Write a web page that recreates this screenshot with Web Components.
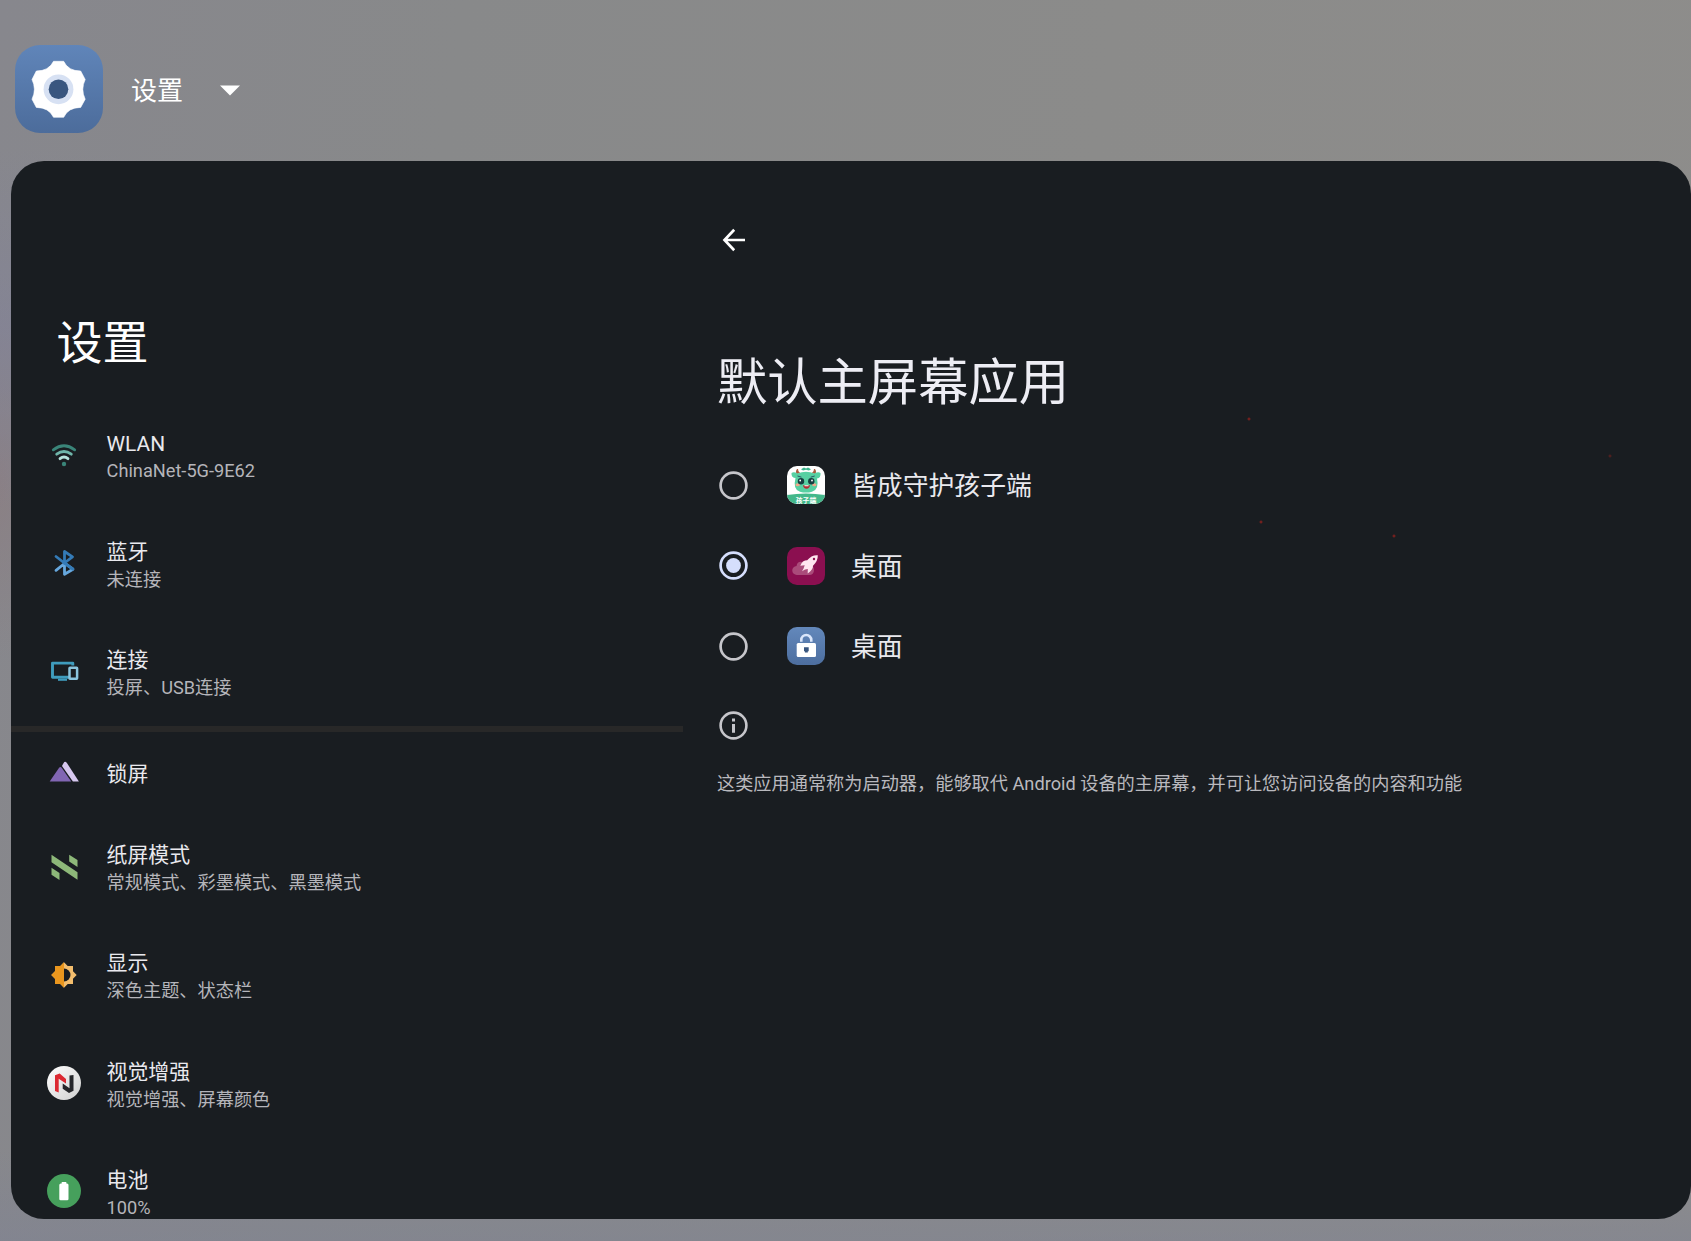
<!DOCTYPE html>
<html lang="zh-CN">
<head>
<meta charset="utf-8">
<title>设置</title>
<style>
html,body{margin:0;height:100%;overflow:hidden}
body{font-family:Roboto,"Noto Sans CJK SC",sans-serif;color:#e9e9ee}
</style>
</head>
<body>
<recents-screen>
  <app-header slot="header" label="设置"></app-header>
  <settings-nav slot="nav" heading="设置">
    <nav-row icon="wifi" label="WLAN" sub="ChinaNet-5G-9E62" class="latin"></nav-row>
    <nav-row icon="bluetooth" label="蓝牙" sub="未连接"></nav-row>
    <nav-row icon="devices" label="连接" sub="投屏、USB连接"></nav-row>
    <nav-divider></nav-divider>
    <nav-row icon="lockscreen" label="锁屏" class="single"></nav-row>
    <nav-row icon="paper" label="纸屏模式" sub="常规模式、彩墨模式、黑墨模式"></nav-row>
    <nav-row icon="display" label="显示" sub="深色主题、状态栏"></nav-row>
    <nav-row icon="vision" label="视觉增强" sub="视觉增强、屏幕颜色"></nav-row>
    <nav-row icon="battery" label="电池" sub="100%"></nav-row>
  </settings-nav>
  <home-picker slot="detail" heading="默认主屏幕应用" note="这类应用通常称为启动器，能够取代 Android 设备的主屏幕，并可让您访问设备的内容和功能">
    <radio-row icon="guard" label="皆成守护孩子端"></radio-row>
    <radio-row icon="rocket" label="桌面" checked></radio-row>
    <radio-row icon="padlock" label="桌面"></radio-row>
  </home-picker>
</recents-screen>
<script>
const ICONS = {
  gear:`<svg width="88" height="88" viewBox="0 0 88 88"><defs><linearGradient id="g" x1="0" y1="0" x2="0" y2="1"><stop offset="0" stop-color="#6085b9"/><stop offset="1" stop-color="#4c6c9b"/></linearGradient></defs><rect width="88" height="88" rx="25" fill="url(#g)"/><path d="M38.500 16.300H48.700Q53 26 65.700 26L70.200 34.500Q65.400 44.300 70.200 54.200L65.700 62.400Q53 62.500 48.700 72.300H38.500Q34 62.500 21.300 62.400L17 54.200Q21.800 44.300 17 34.500L21.300 26Q34 26 38.500 16.300Z" fill="#fff" stroke="#fff" stroke-width=".6" stroke-linejoin="round"/><circle cx="43.500" cy="44.300" r="14.900" fill="#d7e1f3"/><circle cx="43.500" cy="44.300" r="9.800" fill="#39567f"/></svg>`,
  wifi:`<svg width="34" height="34" viewBox="0 0 34 34" fill="none" stroke-linecap="round" stroke-width="2.800"><path d="M6.300 11.800Q17 3.700 27.700 11.800" stroke="#3a8579"/><path d="M9.700 16.200Q17 10.800 24.300 16.200" stroke="#6fb5aa"/><path d="M13 20.700Q17 17.400 21 20.700" stroke="#b5e2dc"/><circle cx="17" cy="26" r="2.200" fill="#3a8579"/></svg>`,
  bluetooth:`<svg width="34" height="34" viewBox="0 0 34 34" fill="none" stroke-width="2.800" stroke-linejoin="round" stroke-linecap="round"><path d="M17.300 17L26 23.200L17.500 28.200V17.500L9 24.300" stroke="#66a7dd"/><path d="M9 10.500L17.400 17L25.500 10.800L17.500 5.500V17.500M17.400 17L25.800 23" stroke="#347bb7"/></svg>`,
  devices:`<svg width="34" height="34" viewBox="0 0 34 34" fill="none"><path d="M25.800 11.500V9.100H5.500V23.200H22" stroke="#3f9cbd" stroke-width="2.900" stroke-linejoin="round"/><path d="M11 25.800H20" stroke="#3f9cbd" stroke-width="2"/><rect x="22.500" y="13.800" width="7.600" height="11" rx=".5" stroke="#8bc5de" stroke-width="2.500"/></svg>`,
  lockscreen:`<svg width="34" height="34" viewBox="0 0 34 34"><path d="M2.700 26.500L12.100 12.700Q13.400 11.200 14.700 12.700L24.200 26.500Z" fill="#8166b3"/><path d="M15 11L16.600 8Q18 5.500 19.900 8L31.900 26.500H25.900Z" fill="#d7c8f0"/></svg>`,
  paper:`<svg width="34" height="34" viewBox="0 0 34 34" fill="#8db879"><path d="M4.500 4.800L30.500 22.200V29.800L4.500 12.300ZM22.200 4.800L30.500 10V17L22.200 11.500ZM4.500 17.800L12.500 23V30L4.500 24.800Z"/></svg>`,
  display:`<svg width="34" height="34" viewBox="0 0 34 34"><path d="M17 4.300L20.700 8H26V13.300L29.700 17L26 20.700V26H20.700L17 29.700L13.300 26H8V20.700L4.300 17L8 13.300V8H13.300Z" fill="#f3bd6d"/><path d="M17 4.300V29.700L13.300 26H8V20.700L4.300 17L8 13.300V8H13.300Z" fill="#e9961e"/><path d="M17 10.500a6.500 6.500 0 0 1 0 13z" fill="#191d21"/></svg>`,
  vision:`<svg width="34" height="34" viewBox="0 0 34 34"><defs><linearGradient id="v" x1="0" y1="0" x2="1" y2="1"><stop offset="0" stop-color="#fff"/><stop offset="1" stop-color="#cfcfcf"/></linearGradient></defs><circle cx="17" cy="17" r="17" fill="url(#v)"/><path d="M8 25V9.300L12.700 7.500L19 13V17.500L11.700 12.700V26.500Z" fill="#dc2932"/><path d="M26.500 9V24.700L22 27L15.700 22.700V17.500L22.500 22.300V9.500Z" fill="#25262a"/></svg>`,
  battery:`<svg width="34" height="34" viewBox="0 0 34 34"><circle cx="17" cy="17" r="17" fill="#46a05c"/><path d="M14.700 9.500V8h4.600v1.500H20q1.500 0 1.500 1.500v14q0 1.300-1.300 1.300h-6.600q-1.300 0-1.300-1.300V11q0-1.500 1.500-1.500z" fill="#fff"/></svg>`,
  guard:`<svg width="38" height="38" viewBox="0 0 38 38"><defs><clipPath id="c"><rect width="38" height="38" rx="10"/></clipPath></defs><g clip-path="url(#c)"><rect width="38" height="38" fill="#fff"/><path d="M0 29Q19 26 38 29V38H0Z" fill="#43b88b"/><path d="M14 3.200l3-1.700 2 1 2-1 3 1.700-2 1.300-3-.8-3 .8z" fill="#3db58d"/><path d="M9.700 7.500Q9 4.500 10.500 3Q10.500 5.500 12.300 6.700ZM28.300 7.500Q29 4.500 27.500 3Q27.500 5.500 25.700 6.700Z" fill="#a95b3e" stroke="#a95b3e"/><path d="M9 12Q4 12 4.500 7Q7 5.500 10.500 7.500Q19 4 27.500 7.500Q31 5.500 33.500 7Q34 12 30 12.500Q32.500 23.500 25 25.700Q19 27.500 13 25.700Q5.500 23.500 8.500 12Z" fill="#57d0a2"/><ellipse cx="10.700" cy="18.700" rx="2.200" ry="1.500" fill="#f0a78a"/><ellipse cx="27.300" cy="18.700" rx="2.200" ry="1.500" fill="#f0a78a"/><circle cx="14" cy="15.200" r="3.200" fill="#173e40"/><circle cx="24.300" cy="15.200" r="3.200" fill="#173e40"/><circle cx="13.200" cy="14.500" r=".9" fill="#fff"/><circle cx="25" cy="14.500" r=".9" fill="#fff"/><path d="M10.500 10l4 1.200M27.700 10l-4 1.200" stroke="#235" stroke-width=".8"/><path d="M16 19.300h7Q22.500 22.700 19.500 22.700T16 19.300Z" fill="#b32c32"/><path d="M17.500 19.300h4v1h-4z" fill="#fff"/></g><text x="19" y="36.700" text-anchor="middle" font-size="6.800" font-weight="700" fill="#fff" font-family="Noto Sans CJK SC,sans-serif">孩子端</text></svg>`,
  rocket:`<svg width="38" height="38" viewBox="0 0 38 38"><rect width="38" height="38" rx="10" fill="#8b0f50"/><path d="M10 28a4.500 4.500 0 0 1-.5-9Q10.500 14 15 15Q18 12.500 20.500 16Q27 18 27 23Q27 28 22 28Z" fill="#aa4b7a"/><path d="M30.800 8.200Q24.500 7.700 20.200 13.300Q15.500 13.300 13.300 18.700L17.700 18.300L16.500 21.700L15 24.200L18 22.500L20.800 22L20.700 26.500Q26.300 22.500 26 18.700Q31 14 30.800 8.200Z" fill="#ffe5f0"/><circle cx="27" cy="12" r="1.200" fill="#8b0f50"/></svg>`,
  padlock:`<svg width="38" height="38" viewBox="0 0 38 38"><defs><linearGradient id="p" x1="0" y1="0" x2="0" y2="1"><stop offset="0" stop-color="#6388bb"/><stop offset="1" stop-color="#4d6e9f"/></linearGradient></defs><rect width="38" height="38" rx="10" fill="url(#p)"/><path d="M14.300 14.800V13a5 5 0 0 1 10 0V14.800" fill="none" stroke="#d9e5fa" stroke-width="2.600"/><rect x="9.700" y="16" width="19.300" height="14" rx="1.500" fill="#fff"/><path d="M17 20.300h4.700v3.900h-.9v1.300h-2.900v-1.300h-.9z" fill="#39567f"/></svg>`,
  back:`<svg width="24" height="24" viewBox="0 0 24 24" fill="none" stroke="#fff" stroke-width="2.700"><path d="M12.200 1.800L2.500 12L12.200 22.200M2.500 12H23"/></svg>`,
  info:`<svg width="29" height="29" viewBox="0 0 29 29"><circle cx="14.500" cy="14.500" r="12.900" fill="none" stroke="#c6c6cb" stroke-width="2.600"/><path d="M13 7.500h3v3h-3zM13 13h3v8.700h-3z" fill="#c6c6cb"/></svg>`
};
const define = (name, render) => customElements.define(name, class extends HTMLElement {
  connectedCallback() {
    if (this.shadowRoot) return;
    this.attachShadow({mode:'open'}).innerHTML = render(this);
  }
});
define('recents-screen', () => `<style>
:host{display:flex;flex-direction:column;box-sizing:border-box;width:1691px;height:1241px;padding:0 .5px 22px 11.400px;overflow:hidden;
background:
linear-gradient(to bottom,transparent 1150px,rgba(126,130,148,.5) 1241px),
radial-gradient(ellipse 500px 180px at 0 330px,rgba(130,130,153,.6),transparent),
radial-gradient(ellipse 60px 180px at 0 480px,rgba(139,126,130,.8),transparent),
linear-gradient(98deg,#87878d 0,#88898a 25%,#8b8b8a 60%,#8e8d8b 100%)}
.head{height:161px;flex:none}
.panel{flex:1;display:flex;min-height:0;border-radius:33px;overflow:hidden;background:
radial-gradient(circle 2px at 1238px 258px,#a3211c,transparent),
radial-gradient(circle 2px at 1250px 361px,#a3211c,transparent),
radial-gradient(circle 2px at 1383px 375px,#a3211c,transparent),
radial-gradient(circle 2px at 1599px 295px,#6a201e,transparent),
#191d21}
</style><div class="head"><slot name="header"></slot></div><div class="panel"><slot name="nav"></slot><slot name="detail"></slot></div>`);
define('app-header', el => `<style>
:host{display:flex;align-items:center;padding:45px 0 0 4px;color:#fff}
svg{display:block;flex:none}
span{font-size:26px;line-height:40px;margin:4px 0 0 27.700px}
.caret{margin:2px 0 0 36px}
</style>${ICONS.gear}<span>${el.getAttribute('label')}</span><svg class="caret" width="22" height="11" viewBox="0 0 22 11"><path d="M1 .5H21L11 10.500Z" fill="#fff"/></svg>`);
define('settings-nav', el => `<style>
:host{display:flex;flex-direction:column;width:671.600px;flex:none}
h1{flex:none;margin:0;padding:148px 0 0 45.200px;height:92px;font-weight:400;font-size:46px;line-height:68px;color:#fff}
</style><h1>${el.getAttribute('heading')}</h1><slot></slot>`);
define('nav-divider', () => `<style>:host{display:block;height:6px;flex:none;background:#282828}</style>`);
define('nav-row', el => `<style>
:host{display:flex;align-items:center;flex:none;height:108.200px;padding-left:35.600px}
:host(.single){height:81px}
.icon{width:34px;height:34px;flex:none}
svg{display:block}
.text{display:flex;flex-direction:column;margin-left:25.600px;padding-top:5px}
:host(.single) .text{padding-top:4px}
:host(.latin) .text{padding-top:4px}
.t{font-size:20.900px;line-height:28px;color:#e9e9ee}
.s{font-size:18.190px;line-height:28px;color:#b5b5ba}
:host(.latin) .t{line-height:27px}
:host(.latin) .s{line-height:26px}
</style><div class="icon">${ICONS[el.getAttribute('icon')]}</div><div class="text"><div class="t">${el.getAttribute('label')}</div>${el.hasAttribute('sub')?`<div class="s">${el.getAttribute('sub')}</div>`:''}</div>`);
define('home-picker', el => `<style>
:host{display:flex;flex-direction:column;flex:1;min-width:0;padding-left:34px}
svg{display:block}
.back{padding:67px 0 0 5px}
h2{margin:93px 0 0;font-weight:400;font-size:50.300px;line-height:76px;color:#ededf4}
.list{display:flex;flex-direction:column;margin-top:24px}
.info{margin:24px 0 0 2px}
p{margin:30px 0 0;font-size:18.190px;line-height:28px;color:#b9b9be;white-space:nowrap}
</style><div class="back">${ICONS.back}</div><h2>${el.getAttribute('heading')}</h2><div class="list"><slot></slot></div><div class="info">${ICONS.info}</div><p>${el.getAttribute('note')}</p>`);
define('radio-row', el => {
  const on = el.hasAttribute('checked'), c = on ? '#d5defc' : '#c6c6cb';
  return `<style>
:host{display:flex;align-items:center;height:80.600px;padding-left:2px}
svg{display:block;flex:none}
.icon{margin-left:39px}
span{font-size:25.830px;line-height:40px;margin-left:26px;padding-top:2px;color:#e9e9ee}
</style><svg width="29" height="29" viewBox="0 0 29 29"><circle cx="14.500" cy="14.500" r="12.900" fill="none" stroke="${c}" stroke-width="2.700"/>${on?`<circle cx="14.500" cy="14.500" r="7.400" fill="${c}"/>`:''}</svg><div class="icon">${ICONS[el.getAttribute('icon')]}</div><span>${el.getAttribute('label')}</span>`;
});
</script>
</body>
</html>
